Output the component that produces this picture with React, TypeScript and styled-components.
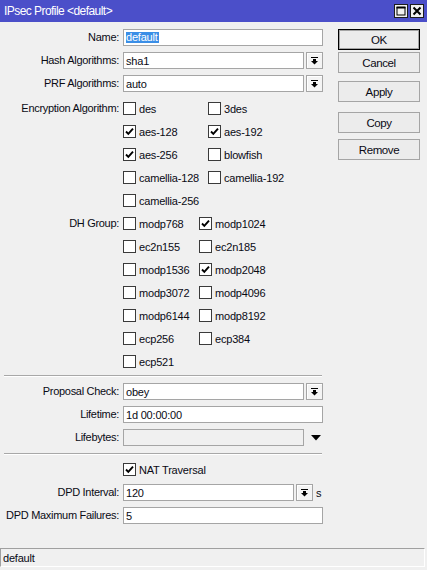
import React from "react";
import styled, { createGlobalStyle } from "styled-components";

const Global = createGlobalStyle`
  html, body { margin: 0; padding: 0; background: #f0f0f0; }
  body {
    font-family: "Liberation Sans", Arial, sans-serif;
    font-size: 11px;
    color: #0a0a14;
  }
  * { box-sizing: border-box; }
`;

const Window = styled.div`
  width: 427px;
  height: 570px;
  display: flex;
  flex-direction: column;
  background: #f0f0f0;
  overflow: hidden;
`;

const TitleBar = styled.div`
  height: 22px;
  flex: none;
  background: #4b4fc9;
  display: flex;
  align-items: center;
  padding: 0 3px 0 4px;
  color: #fff;
  font-size: 12px;
  letter-spacing: -0.55px;
`;

const Title = styled.div`
  flex: 1;
`;

const TitleButtons = styled.div`
  display: flex;
  gap: 2px;
`;

const TitleButton = styled.div`
  width: 14px;
  height: 14px;
  background: #f0f0f0;
  border: 1px solid #1c1c1c;
  display: flex;
  align-items: center;
  justify-content: center;
`;

const Body = styled.div`
  display: flex;
  padding-top: 4px;
`;

const Form = styled.div`
  width: 330px;
  display: flex;
  flex-direction: column;
`;

const Row = styled.div<{ $mt?: number }>`
  display: flex;
  align-items: center;
  height: 23px;
  margin-top: ${(p) => p.$mt ?? 0}px;
`;

const GroupRow = styled.div<{ $mt?: number }>`
  display: flex;
  align-items: flex-start;
  margin-top: ${(p) => p.$mt ?? 0}px;
`;

const Label = styled.div`
  width: 119px;
  flex: none;
  margin-right: 4px;
  text-align: right;
  white-space: nowrap;
  letter-spacing: -0.3px;
  line-height: 23px;
  height: 23px;
`;

const TextInput = styled.div<{ $w: number; $disabled?: boolean }>`
  width: ${(p) => p.$w}px;
  height: 17px;
  flex: none;
  border: 1px solid #a5a5a5;
  background: ${(p) => (p.$disabled ? "#f0f0f0" : "#fff")};
  padding-left: 2px;
  display: flex;
  align-items: center;
  white-space: nowrap;
  letter-spacing: -0.2px;
`;

const Selected = styled.span`
  background: #3a8ee6;
  color: #fff;
  line-height: 11px;
  padding: 0 1px 0 0;
`;

const DropButton = styled.div`
  width: 17px;
  height: 17px;
  flex: none;
  margin-left: 2px;
  border: 1px solid #a5a5a5;
  background: #f4f4f4;
  box-shadow: inset 1px 1px 0 #fff;
  display: flex;
  align-items: center;
  justify-content: center;
`;

const PlainArrow = styled.div`
  margin-left: 7px;
  display: flex;
  align-items: center;
`;

const Unit = styled.span`
  margin-left: 3px;
`;

const OptionGrid = styled.div<{ $col: number }>`
  display: grid;
  grid-template-columns: ${(p) => p.$col}px auto;
  grid-auto-rows: 23px;
  align-items: center;
`;

const Option = styled.label`
  display: flex;
  align-items: center;
  gap: 3px;
  white-space: nowrap;
  letter-spacing: -0.2px;
`;

const Box = styled.span`
  width: 13px;
  height: 13px;
  flex: none;
  border: 1px solid #3a3a3a;
  background: #fff;
  display: flex;
  align-items: center;
  justify-content: center;
`;

const Separator = styled.div<{ $mt: number; $mb: number }>`
  margin: ${(p) => p.$mt}px 8px ${(p) => p.$mb}px 4px;
  height: 2px;
  border-top: 1px solid #a8a8a8;
  border-bottom: 1px solid #fff;
`;

const ButtonCol = styled.div`
  width: 82px;
  margin-left: 8px;
  display: flex;
  flex-direction: column;
`;

const Button = styled.div<{ $mt: number; $default?: boolean }>`
  height: 21px;
  margin-top: ${(p) => p.$mt}px;
  border: 1px solid ${(p) => (p.$default ? "#000" : "#a5a5a5")};
  box-shadow: ${(p) => (p.$default ? "inset 0 0 0 1px #a5a5a5" : "none")};
  background: #ececec;
  display: flex;
  align-items: center;
  justify-content: center;
  font-size: 11.5px;
  letter-spacing: -0.4px;
`;

const StatusBar = styled.div`
  margin-top: auto;
  margin-bottom: 3px;
  margin-right: 2px;
  height: 19px;
  border-top: 1px solid #a0a0a0;
  border-left: 1px solid #a0a0a0;
  border-bottom: 1px solid #fff;
  border-right: 1px solid #fff;
  padding-left: 2px;
  display: flex;
  align-items: center;
  letter-spacing: -0.2px;
`;

const DropIcon = () => (
  <svg width="7" height="8" viewBox="0 0 7 8">
    <rect x="0" y="0" width="7" height="1" fill="#000" />
    <rect x="2" y="2" width="3" height="2" fill="#000" />
    <polygon points="0,4 7,4 3.5,7.5" fill="#000" />
  </svg>
);

const Check = () => (
  <svg width="11" height="11" viewBox="0 0 11 11">
    <polyline points="2,5.5 4.3,7.8 9,2.6" fill="none" stroke="#000" strokeWidth="1.9" />
  </svg>
);

const CheckOption = ({ label, checked }: { label: string; checked?: boolean }) => (
  <Option>
    <Box>{checked && <Check />}</Box>
    {label}
  </Option>
);

const encryption: [string, boolean][] = [
  ["des", false],
  ["3des", false],
  ["aes-128", true],
  ["aes-192", true],
  ["aes-256", true],
  ["blowfish", false],
  ["camellia-128", false],
  ["camellia-192", false],
  ["camellia-256", false],
];

const dh: [string, boolean][] = [
  ["modp768", false],
  ["modp1024", true],
  ["ec2n155", false],
  ["ec2n185", false],
  ["modp1536", false],
  ["modp2048", true],
  ["modp3072", false],
  ["modp4096", false],
  ["modp6144", false],
  ["modp8192", false],
  ["ecp256", false],
  ["ecp384", false],
  ["ecp521", false],
];

export default function App() {
  return (
    <Window>
      <Global />
      <TitleBar>
        <Title>IPsec Profile &lt;default&gt;</Title>
        <TitleButtons>
          <TitleButton>
            <svg width="10" height="10" viewBox="0 0 10 10">
              <rect x="1" y="1.5" width="8" height="7.5" fill="none" stroke="#000" strokeWidth="1" />
              <rect x="0.5" y="0.5" width="9" height="2" fill="#000" />
            </svg>
          </TitleButton>
          <TitleButton>
            <svg width="10" height="10" viewBox="0 0 10 10">
              <path d="M1.5 1.5 L8.5 8.5 M8.5 1.5 L1.5 8.5" stroke="#000" strokeWidth="2" />
            </svg>
          </TitleButton>
        </TitleButtons>
      </TitleBar>
      <Body>
        <Form>
          <Row>
            <Label>Name:</Label>
            <TextInput $w={200}>
              <Selected>default</Selected>
            </TextInput>
          </Row>
          <Row>
            <Label>Hash Algorithms:</Label>
            <TextInput $w={181}>sha1</TextInput>
            <DropButton>
              <DropIcon />
            </DropButton>
          </Row>
          <Row>
            <Label>PRF Algorithms:</Label>
            <TextInput $w={181}>auto</TextInput>
            <DropButton>
              <DropIcon />
            </DropButton>
          </Row>
          <GroupRow $mt={2}>
            <Label>Encryption Algorithm:</Label>
            <OptionGrid $col={85}>
              {encryption.map(([l, c]) => (
                <CheckOption key={l} label={l} checked={c} />
              ))}
            </OptionGrid>
          </GroupRow>
          <GroupRow>
            <Label>DH Group:</Label>
            <OptionGrid $col={76}>
              {dh.map(([l, c]) => (
                <CheckOption key={l} label={l} checked={c} />
              ))}
            </OptionGrid>
          </GroupRow>
          <Separator $mt={2} $mb={3} />
          <Row>
            <Label>Proposal Check:</Label>
            <TextInput $w={181}>obey</TextInput>
            <DropButton>
              <DropIcon />
            </DropButton>
          </Row>
          <Row>
            <Label>Lifetime:</Label>
            <TextInput $w={200}>1d 00:00:00</TextInput>
          </Row>
          <Row>
            <Label>Lifebytes:</Label>
            <TextInput $w={181} $disabled />
            <PlainArrow>
              <svg width="10" height="6" viewBox="0 0 10 6">
                <polygon points="0,0 10,0 5,5.5" fill="#000" />
              </svg>
            </PlainArrow>
          </Row>
          <Separator $mt={4} $mb={3} />
          <Row>
            <Label />
            <CheckOption label="NAT Traversal" checked />
          </Row>
          <Row>
            <Label>DPD Interval:</Label>
            <TextInput $w={171}>120</TextInput>
            <DropButton>
              <DropIcon />
            </DropButton>
            <Unit>s</Unit>
          </Row>
          <Row>
            <Label>DPD Maximum Failures:</Label>
            <TextInput $w={200}>5</TextInput>
          </Row>
        </Form>
        <ButtonCol>
          <Button $mt={3} $default>OK</Button>
          <Button $mt={2}>Cancel</Button>
          <Button $mt={8}>Apply</Button>
          <Button $mt={10}>Copy</Button>
          <Button $mt={6}>Remove</Button>
        </ButtonCol>
      </Body>
      <StatusBar>default</StatusBar>
    </Window>
  );
}
